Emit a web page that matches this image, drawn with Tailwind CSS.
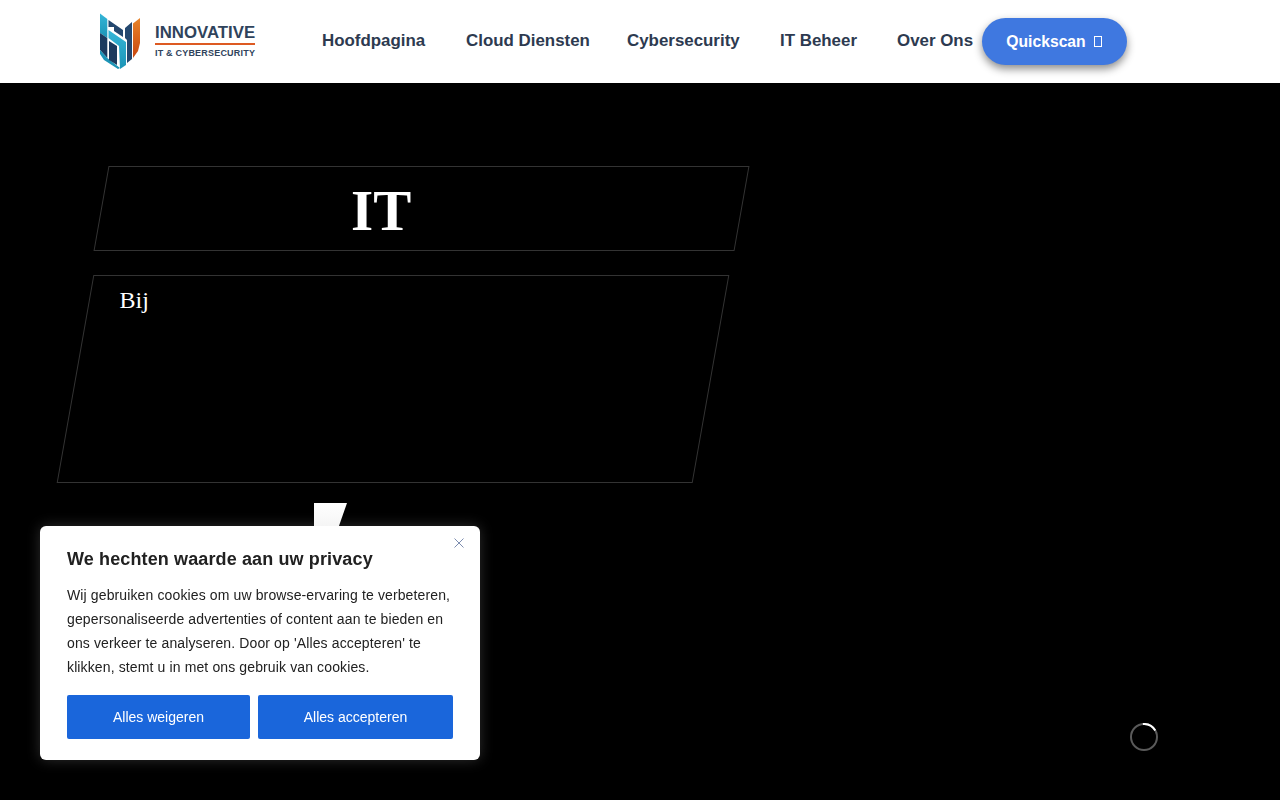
<!DOCTYPE html>
<html lang="nl">
<head>
  <meta charset="UTF-8">
  <meta name="viewport" content="width=device-width, initial-scale=1.0">
  <title>Innovative IT &amp; Cybersecurity</title>
  <script src="https://cdn.jsdelivr.net/npm/@tailwindcss/browser@4"></script>
</head>
<body class="bg-black h-[800px] overflow-hidden font-['Liberation_Sans',Arial,sans-serif]">
  <!-- Header -->
  <header class="h-[83px] bg-white flex items-center pl-[98px]">
    <a href="#" class="flex items-center w-[224px] shrink-0">
      <svg class="w-[44px] h-[56px] shrink-0 -mt-[1px]" viewBox="0 0 44 56" aria-hidden="true">
        <defs>
          <linearGradient id="teal" x1="0" y1="0" x2="0" y2="1">
            <stop offset="0" stop-color="#35b6d8"/>
            <stop offset="1" stop-color="#1c94b6"/>
          </linearGradient>
          <linearGradient id="orange" x1="0" y1="0" x2="0" y2="1">
            <stop offset="0" stop-color="#e8842a"/>
            <stop offset="1" stop-color="#c9470f"/>
          </linearGradient>
        </defs>
        <polygon points="2,0.5 9.3,6 9.3,25 2,20" fill="url(#teal)"/>
        <polygon points="2,20 9.3,25 9.3,45 2,37" fill="#1c3a5e"/>
        <polygon points="2,37 9.3,45 22,55 20,56 6,47 2,41" fill="#1c94b6"/>
        <polygon points="10.5,7 25,17 25,24 16,18 16,14 10.5,14" fill="#24486f"/>
        <polygon points="10.5,17 28,29 28,52 22,56 21,33 10.5,25" fill="url(#teal)"/>
        <polygon points="11,28 19,33 19,52 11,47" fill="#1c3a5e"/>
        <polygon points="27,15 34,9 34,46 29,50 29,27 27,25" fill="#24486f"/>
        <polygon points="35,10.5 42,5 42,30 40,38 35,45" fill="url(#orange)"/>
      </svg>
      <div class="ml-[13px] w-[100px] text-[#2f435c]">
        <div class="text-[16.8px] leading-[18px] font-bold whitespace-nowrap">INNOVATIVE</div>
        <div class="h-[2px] bg-[#dd5a22] mt-[1px]"></div>
        <div class="text-[9px] leading-[12px] mt-[2px] font-bold whitespace-nowrap tracking-[0.2px]">IT &amp; CYBERSECURITY</div>
      </div>
    </a>
    <nav class="flex items-center text-[#2d3a50] text-[16.9px] font-bold whitespace-nowrap -mt-[2px]">
      <a href="#" class="w-[144px]">Hoofdpagina</a>
      <a href="#" class="w-[161px]">Cloud Diensten</a>
      <a href="#" class="w-[153px]">Cybersecurity</a>
      <a href="#" class="w-[117px]">IT Beheer</a>
      <a href="#" class="w-[85px]">Over Ons</a>
    </nav>
    <a href="#" class="w-[145px] h-[47px] pr-[1px] rounded-[24px] bg-[#3f78e0] text-white text-[15.7px] font-bold flex items-center justify-center gap-[8px] shadow-[0_4px_8px_rgba(0,0,0,0.45)]">
      Quickscan
      <span class="w-[8px] h-[11px] border border-white"></span>
    </a>
  </header>

  <!-- Hero -->
  <main class="bg-black pt-[83px] h-[717px]">
    <div class="ml-[101px] w-[641px] h-[85px] border border-[#333] -skew-x-10 flex justify-center">
      <h1 class="skew-x-10 font-['Liberation_Serif',serif] text-[57px] leading-[88px] font-bold text-white mr-[80px]">IT</h1>
    </div>
    <div class="ml-[75px] mt-[24px] w-[636px] h-[208px] border border-[#333] -skew-x-10">
      <p class="skew-x-10 font-['Liberation_Serif',serif] text-[24px] leading-[34px] text-white pl-[29px] pt-[7px]">Bij</p>
    </div>
    <svg class="ml-[314px] mt-[20px] w-[33px] h-[40px]" viewBox="0 0 33 40" aria-hidden="true">
      <defs>
        <linearGradient id="fade" x1="0" y1="0" x2="0" y2="1">
          <stop offset="0" stop-color="#ffffff"/>
          <stop offset="1" stop-color="#eeeeee"/>
        </linearGradient>
      </defs>
      <polygon points="0,0 33,0 19,40 0,40" fill="url(#fade)"/>
    </svg>
  </main>

  <!-- Spinner -->
  <svg class="fixed left-[1130px] top-[723px] w-[28px] h-[28px]" viewBox="0 0 28 28" fill="none" stroke-width="2" aria-hidden="true">
    <circle cx="14" cy="14" r="13" stroke="#5a5a5a"/>
    <path d="M12.87 1.05A13 13 0 0 1 25.26 7.5" stroke="#ffffff"/>
  </svg>

  <!-- Cookie card -->
  <div class="fixed left-[40px] top-[526px] w-[440px] h-[234px] bg-white rounded-[6px] shadow-[0_0_14px_rgba(255,255,255,0.18)] px-[27px] pt-[22px]">
    <button class="absolute right-[15px] top-[11px] text-[#7d8db0]" aria-label="Sluiten">
      <svg class="w-[12px] h-[12px]" viewBox="0 0 12 12" fill="none" stroke="currentColor" stroke-width="1"><path d="M1.5 1.5l9 9M10.5 1.5l-9 9"/></svg>
    </button>
    <h2 class="text-[18px] leading-[22px] font-bold text-[#212121] tracking-[0.125px]">We hechten waarde aan uw privacy</h2>
    <p class="mt-[13px] text-[14px] leading-[24px] text-[#212121] tracking-[0.125px] w-[390px]">Wij gebruiken cookies om uw browse-ervaring te verbeteren, gepersonaliseerde advertenties of content aan te bieden en ons verkeer te analyseren. Door op 'Alles accepteren' te klikken, stemt u in met ons gebruik van cookies.</p>
    <div class="mt-[16px] flex gap-[8px]">
      <button class="w-[183px] h-[44px] rounded-[2px] bg-[#1a66db] text-white text-[14px]">Alles weigeren</button>
      <button class="w-[195px] h-[44px] rounded-[2px] bg-[#1a66db] text-white text-[14px]">Alles accepteren</button>
    </div>
  </div>
</body>
</html>
